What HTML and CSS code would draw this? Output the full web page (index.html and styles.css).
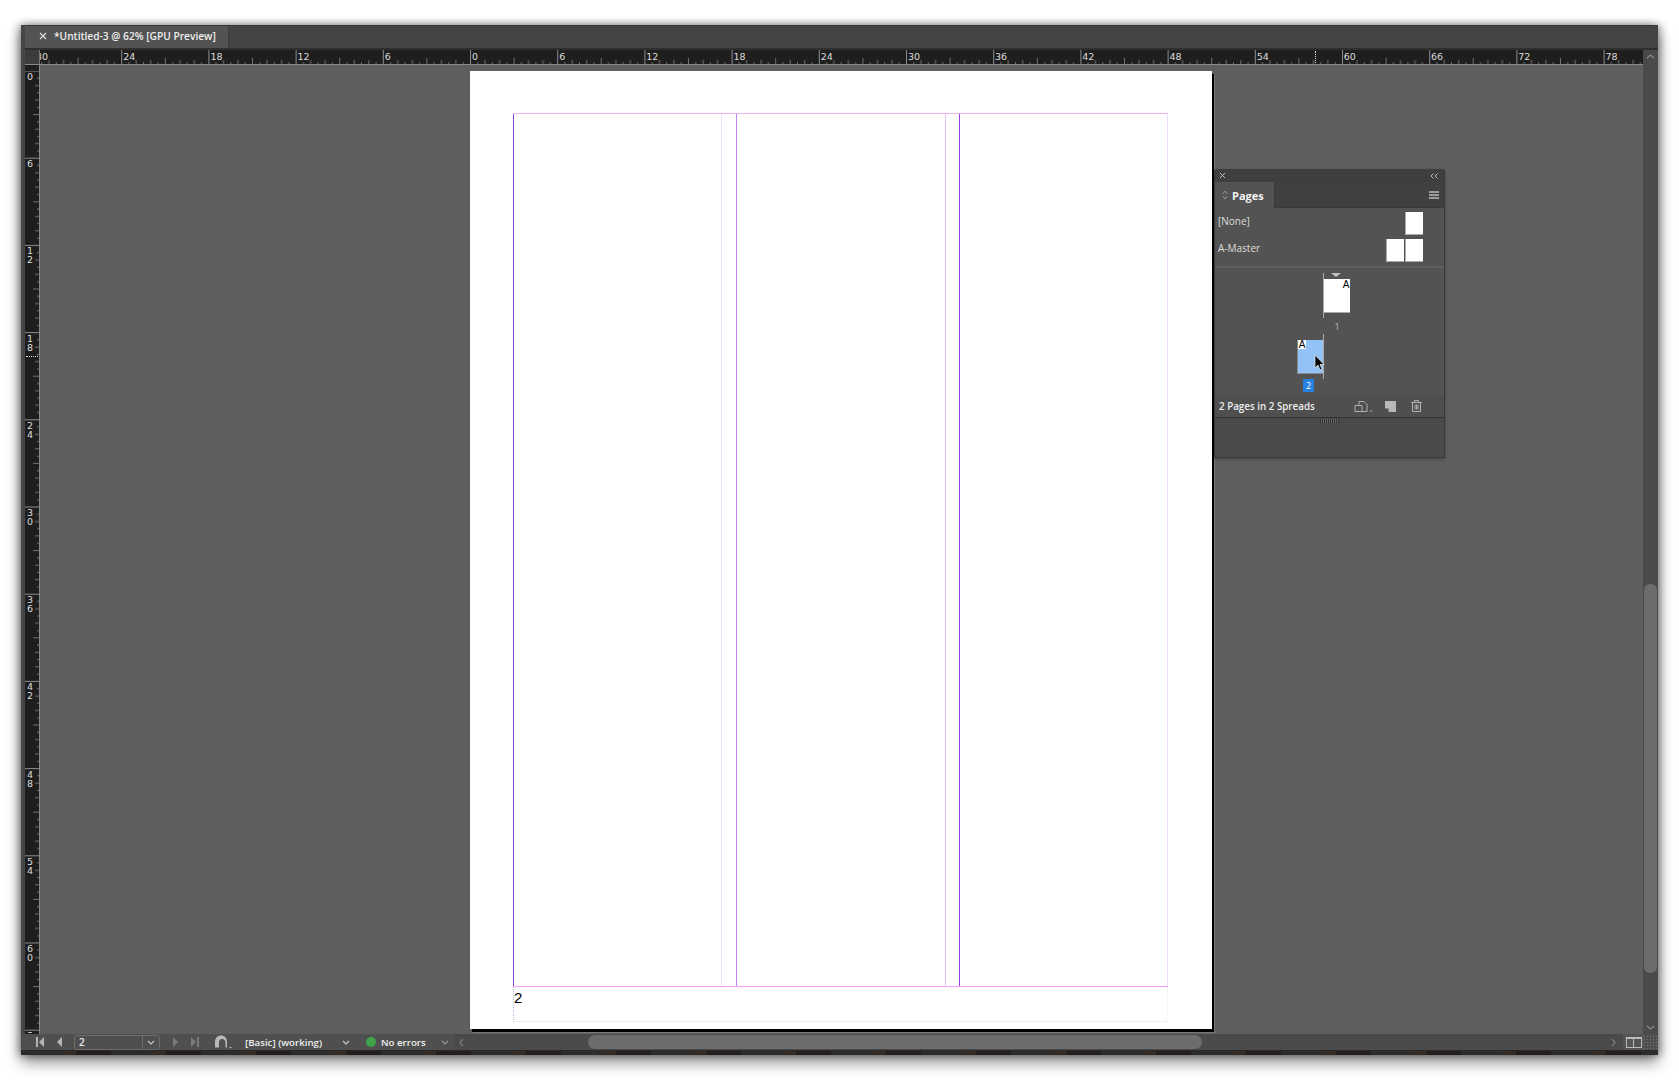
FILE: index.html
```html
<!DOCTYPE html>
<html lang="en">
<head>
    <meta charset="UTF-8">
    <title>*Untitled-3 @ 62% [GPU Preview]</title>
    <link rel="stylesheet" href="styles.css">
</head>
<body>
    <div class="window">
        <div class="tabbar">
            <div class="doc-tab">
                <svg class="tab-close" width="8" height="8" viewBox="0 0 8 8"><path d="M1 1l6 6M7 1L1 7"/></svg>
                <span class="tab-title">*Untitled-3 @ 62% [GPU Preview]</span>
            </div>
        </div>

        <div class="workspace">
            <div class="doc-area">
                <div class="ruler-row">
                    <div class="ruler-corner"></div>
                    <div class="ruler-top">
                        <svg class="ticks" width="100%" height="14">
                            <defs>
                                <pattern id="ticks-h" width="87.2" height="14" x="-6" patternUnits="userSpaceOnUse">
                                    <path class="tick-major" d="M0.5 0v14"/>
                                    <path d="M7.77 12v2M15 10v4M22.3 12v2M29.57 10v4M36.8 12v2M44.1 8v6M51.4 12v2M58.63 10v4M65.9 12v2M73.17 10v4M80.4 12v2"/>
                                </pattern>
                            </defs>
                            <rect width="100%" height="14" fill="url(#ticks-h)"/>
                        </svg>
                        <span class="rule-num">30</span><span class="rule-num">24</span><span class="rule-num">18</span><span class="rule-num">12</span><span class="rule-num">6</span><span class="rule-num">0</span><span class="rule-num">6</span><span class="rule-num">12</span><span class="rule-num">18</span><span class="rule-num">24</span><span class="rule-num">30</span><span class="rule-num">36</span><span class="rule-num">42</span><span class="rule-num">48</span><span class="rule-num">54</span><span class="rule-num">60</span><span class="rule-num">66</span><span class="rule-num">72</span><span class="rule-num">78</span>
                        <i class="mouse-x"></i>
                    </div>
                </div>

                <div class="canvas-row">
                    <div class="ruler-left">
                        <svg class="ticks" width="14" height="100%">
                            <defs>
                                <pattern id="ticks-v" width="14" height="87.2" y="-0.5" patternUnits="userSpaceOnUse">
                                    <path class="tick-major" d="M0 0.5h14"/>
                                    <path d="M12 7.77h2M10 15h4M12 22.3h2M29.57 10M10 29.57h4M12 36.8h2M8 44.1h6M12 51.4h2M10 58.63h4M12 65.9h2M10 73.17h4M12 80.4h2"/>
                                </pattern>
                            </defs>
                            <rect width="14" height="100%" fill="url(#ticks-v)"/>
                        </svg>
                        <span class="rule-num-v"><b>0</b></span>
                        <span class="rule-num-v"><b>6</b></span>
                        <span class="rule-num-v"><b>1</b><b>2</b></span>
                        <span class="rule-num-v"><b>1</b><b>8</b></span>
                        <span class="rule-num-v"><b>2</b><b>4</b></span>
                        <span class="rule-num-v"><b>3</b><b>0</b></span>
                        <span class="rule-num-v"><b>3</b><b>6</b></span>
                        <span class="rule-num-v"><b>4</b><b>2</b></span>
                        <span class="rule-num-v"><b>4</b><b>8</b></span>
                        <span class="rule-num-v"><b>5</b><b>4</b></span>
                        <span class="rule-num-v"><b>6</b><b>0</b></span>
                        <i class="num-sliver"></i>
                        <i class="mouse-y"></i>
                    </div>

                    <div class="canvas">
                        <div class="page">
                            <div class="margins">
                                <div class="col col-1"></div>
                                <div class="col col-gutter"></div>
                                <div class="col col-2"></div>
                                <div class="col col-gutter-2"></div>
                                <div class="col col-3"></div>
                            </div>
                            <div class="slug">2</div>
                        </div>

                        <div class="pages-panel">
                            <div class="panel-top">
                                <svg class="panel-x" width="7" height="7" viewBox="0 0 7 7"><path d="M1 1l5 5M6 1L1 6"/></svg>
                                <svg class="panel-collapse" width="8" height="6" viewBox="0 0 8 6"><path d="M3.500 0.500L1 3l2.500 2.500M7.500 0.500L5 3l2.500 2.500"/></svg>
                            </div>
                            <div class="panel-tabs">
                                <div class="panel-tab">
                                    <svg class="updown" width="6" height="10" viewBox="0 0 6 10"><path d="M0.800 3.800L3 1l2.200 2.800M0.800 6.200L3 9l2.200-2.800"/></svg>
                                    <span>Pages</span>
                                </div>
                                <div class="panel-menu"><i></i><i></i><i></i></div>
                            </div>

                            <div class="masters">
                                <div class="master-row">
                                    <span>[None]</span>
                                    <div class="thumbs"><i></i></div>
                                </div>
                                <div class="master-row">
                                    <span>A-Master</span>
                                    <div class="thumbs"><i></i><i></i></div>
                                </div>
                            </div>

                            <div class="spreads">
                                <div class="spread">
                                    <div class="spine"></div>
                                    <div class="thumb-page">
                                        <i class="spread-mark"></i>
                                        <span class="master-a master-a-right">A</span>
                                    </div>
                                    <div class="page-num page-num-right">1</div>
                                </div>
                                <div class="spread">
                                    <div class="thumb-page thumb-selected">
                                        <span class="master-a master-a-left">A</span>
                                    </div>
                                    <div class="spine"></div>
                                    <div class="page-num page-num-left"><span class="num-badge">2</span></div>
                                </div>
                            </div>

                            <div class="panel-footer">
                                <span class="footer-text">2 Pages in 2 Spreads</span>
                                <svg class="icon-size" width="19" height="14" viewBox="0 0 19 14"><path d="M1 6.500h7v6H1zM5 6.500V2.500h5l3 3v7H8"/><path class="solid" d="M16 11.500h2.500L17.250 13z"/></svg>
                                <svg class="icon-new" width="11" height="11" viewBox="0 0 11 11"><path class="solid" d="M0 0h11v11H3.500V7.500H0z"/></svg>
                                <svg class="icon-trash" width="11" height="12" viewBox="0 0 11 12"><path d="M0 2.500h11M3.500 2.500V0.500h4v2M1.500 2.500v9h8v-9M4 4.500v5M5.500 4.500v5M7 4.500v5"/></svg>
                            </div>
                            <div class="panel-grip"><i></i></div>
                        </div>

                        <svg class="cursor" width="11" height="17" viewBox="0 0 11 17"><path d="M1 1v13l3-3 2 5 2-1-2-4.500h4z"/></svg>
                    </div>
                </div>
            </div>

            <div class="vscroll">
                <svg class="arrow-up" width="9" height="5" viewBox="0 0 9 5"><path d="M1 4l3.500-3L8 4"/></svg>
                <div class="vscroll-track"><div class="vscroll-thumb"></div></div>
                <svg class="arrow-down" width="9" height="5" viewBox="0 0 9 5"><path d="M1 1l3.500 3L8 1"/></svg>
            </div>
        </div>

        <div class="statusbar">
            <svg class="nav nav-first" width="8" height="10" viewBox="0 0 8 10"><path d="M0 0h2v10H0zM8 0v10L3 5z"/></svg>
            <svg class="nav nav-prev" width="5" height="10" viewBox="0 0 5 10"><path d="M5 0v10L0 5z"/></svg>
            <div class="page-box">
                <span class="page-input">2</span>
                <span class="page-drop"><svg class="chev" width="8" height="5" viewBox="0 0 8 5"><path d="M1 1l3 3 3-3"/></svg></span>
            </div>
            <svg class="nav nav-next dim" width="5" height="10" viewBox="0 0 5 10"><path d="M0 0v10l5-5z"/></svg>
            <svg class="nav nav-last dim" width="8" height="10" viewBox="0 0 8 10"><path d="M0 0v10l5-5zM6 0h2v10H6z"/></svg>
            <svg class="profile" width="17" height="14" viewBox="0 0 17 14"><path class="solid" d="M0 12.500V7C0 3 2.500 0.500 6 0.500S12 3 12 7v5.500h-1.500V8C10.500 5.500 9 4 7 4S4 5.500 4 8v4.500zM14 12h3l-1.500 1.500z"/></svg>
            <span class="status-text status-profile">[Basic] (working)</span>
            <svg class="chev chev-profile" width="8" height="5" viewBox="0 0 8 5"><path d="M1 1l3 3 3-3"/></svg>
            <i class="ok-dot"></i>
            <span class="status-text status-errors">No errors</span>
            <svg class="chev chev-errors" width="8" height="5" viewBox="0 0 8 5"><path d="M1 1l3 3 3-3"/></svg>
            <div class="hscroll">
                <svg class="arrow-left" width="5" height="9" viewBox="0 0 5 9"><path d="M4 1L1 4.500 4 8"/></svg>
                <div class="hscroll-track"><div class="hscroll-thumb"></div></div>
                <svg class="arrow-right" width="5" height="9" viewBox="0 0 5 9"><path d="M1 1l3 3.500L1 8"/></svg>
            </div>
            <div class="layout-btn"><i></i><i></i></div>
            <div class="resize-grip"></div>
        </div>
        <div class="desk-edge"></div>
    </div>
</body>
</html>
```

FILE: styles.css
```css
* {
    box-sizing: border-box;
}

body {
    margin: 0;
    padding: 25px 21px 0 21px;
    height: 1080px;
    overflow: hidden;
    background-color: #fff;
    font-family: "Open Sans", sans-serif;
    color: #eee;
}

svg {
    display: block;
    flex-shrink: 0;
}

.window {
    width: 1637px;
    height: 1030px;
    display: flex;
    flex-direction: column;
    background-color: #4a4a4a;
    border-left: 4px solid #464646;
    box-shadow: 0 8px 14px rgba(0, 0, 0, 0.4), 3px 0 8px rgba(0, 0, 0, 0.3), -3px 0 8px rgba(0, 0, 0, 0.3);
}

/* tab bar */
.tabbar {
    height: 25px;
    flex-shrink: 0;
    background-color: #444;
    border-top: 1px solid #383838;
    border-bottom: 2px solid #2f2f2f;
}

.doc-tab {
    width: 204px;
    height: 22px;
    display: flex;
    align-items: center;
    padding: 0 0 2px 14px;
    background-color: #535353;
    border-right: 1px solid #3a3a3a;
}

.tab-close {
    fill: none;
    stroke: #ddd;
    stroke-width: 1.2;
}

.tab-title {
    margin-left: 7px;
    font-size: 10.2px;
    font-weight: 600;
    white-space: nowrap;
}

/* rulers */
.workspace {
    flex: 1;
    min-height: 0;
    display: flex;
}

.doc-area {
    flex: 1;
    min-width: 0;
    display: flex;
    flex-direction: column;
}

.ruler-row {
    height: 15px;
    flex-shrink: 0;
    display: flex;
    background-color: #1e1e1e;
    border-bottom: 1px solid #8a8a8a;
}

.ruler-corner {
    width: 15px;
    flex-shrink: 0;
    background-color: #3c3c3c;
    border-right: 1px solid #777;
}

.ruler-top {
    flex: 1;
    min-width: 0;
    position: relative;
    overflow: hidden;
    display: flex;
    padding-left: 2px;
    margin-left: -6px;
    clip-path: inset(0 0 0 6px);
}

.ticks {
    position: absolute;
    left: 0;
    top: 0;
    fill: none;
}

.ruler-top .ticks {
    left: 6px;
}

.ticks path {
    stroke: #6f6f6f;
    stroke-width: 1;
}

.ticks .tick-major {
    stroke: #8c8c8c;
}

.rule-num {
    width: 87.2px;
    flex-shrink: 0;
    position: relative;
    font-family: "DejaVu Sans", sans-serif;
    font-size: 9.5px;
    line-height: 14px;
    color: #ddd;
}

.mouse-x {
    position: absolute;
    left: 1281px;
    top: 1px;
    height: 12px;
    border-left: 1px dotted #ddd;
}

.canvas-row {
    flex: 1;
    min-height: 0;
    display: flex;
}

.ruler-left {
    width: 15px;
    flex-shrink: 0;
    position: relative;
    overflow: hidden;
    padding-top: 6px;
    background-color: #1e1e1e;
    border-right: 1px solid #8a8a8a;
}

.ruler-left .ticks {
    top: 6px;
}

.rule-num-v {
    display: block;
    height: 87.2px;
    position: relative;
    padding: 1px 0 0 2px;
    font-family: "DejaVu Sans", sans-serif;
    font-size: 9.5px;
    line-height: 9px;
    color: #ddd;
}

.rule-num-v b {
    display: block;
    font-weight: normal;
}

.num-sliver {
    display: block;
    width: 4px;
    height: 1px;
    margin: 2px 0 0 3px;
    background-color: #bbb;
}

.mouse-y {
    position: absolute;
    left: 1px;
    top: 291px;
    width: 12px;
    border-top: 1px dotted #ddd;
}

/* canvas + document page */
.canvas {
    flex: 1;
    min-width: 0;
    position: relative;
    padding: 6px 0 0 430px;
    background-color: #5e5e5e;
}

.page {
    width: 742px;
    height: 958px;
    padding: 42px 44px 0 43px;
    background-color: #fff;
    box-shadow: 2px 3px 0 #000, 3px 4px 0 #777;
}

.margins {
    height: 874px;
    display: grid;
    grid-template-columns: 209px 15px 209px 14px 208px;
    border-top: 1px solid #efb1f3;
    border-bottom: 1px solid #fa9dfb;
}

.col-1 {
    border-left: 1px solid #8a3fd6;
    border-right: 1px solid #ece4fb;
}

.col-gutter {
    border-right: 1px solid #c184f5;
}

.col-2 {
    border-right: 1px solid #e0c0fa;
}

.col-gutter-2 {
    border-right: 1px solid #9a40e8;
}

.col-3 {
    border-right: 1px solid #eedcf8;
}

.slug {
    height: 35px;
    padding-top: 1px;
    font-family: "Liberation Sans", sans-serif;
    font-size: 15px;
    line-height: 20px;
    color: #000;
    border-left: 1px dotted #a9bcd8;
    border-right: 1px dotted #eee;
    border-bottom: 1px dotted #ddd;
}

/* pages panel */
.pages-panel {
    position: absolute;
    left: 1174px;
    top: 104px;
    width: 231px;
    height: 289px;
    display: flex;
    flex-direction: column;
    background-color: #535353;
    border: 1px solid #383838;
    border-top: 0;
    border-radius: 3px 3px 0 0;
    box-shadow: 0 1px 3px rgba(0, 0, 0, 0.3);
}

.panel-top {
    height: 13px;
    flex-shrink: 0;
    display: flex;
    align-items: center;
    justify-content: space-between;
    padding: 0 6px 0 4px;
    background-color: #3e3e3e;
    border-radius: 3px 3px 0 0;
}

.panel-x,
.panel-collapse {
    fill: none;
    stroke: #bbb;
    stroke-width: 1;
}

.panel-tabs {
    height: 26px;
    flex-shrink: 0;
    display: flex;
    justify-content: space-between;
    background-color: #404040;
    border-bottom: 1px solid #383838;
}

.panel-tab {
    width: 60px;
    display: flex;
    align-items: center;
    gap: 4px;
    padding-left: 7px;
    background-color: #535353;
    border-right: 1px solid #383838;
    margin-bottom: -1px;
    font-size: 11px;
    font-weight: 700;
    color: #f2f2f2;
}

.updown {
    fill: none;
    stroke: #aaa;
    stroke-width: 0.8;
}

.panel-menu {
    display: flex;
    flex-direction: column;
    justify-content: center;
    gap: 1px;
    padding-right: 5px;
}

.panel-menu i {
    width: 10px;
    height: 2px;
    background-color: #9a9a9a;
}

.masters {
    height: 60px;
    flex-shrink: 0;
    padding-top: 2px;
    border-bottom: 2px solid #5e5e5e;
}

.master-row {
    height: 27px;
    display: flex;
    align-items: center;
    justify-content: space-between;
    padding: 0 21px 0 3px;
    font-size: 10px;
    color: #ddd;
}

.master-row span {
    margin-bottom: 5px;
}

.thumbs {
    display: flex;
    gap: 1px;
}

.thumbs i {
    width: 18px;
    height: 23px;
    background-color: #fff;
    border-left: 1px solid #aaa;
    border-bottom: 1px solid #aaa;
}

.spreads {
    flex: 1;
    padding-top: 5px;
}

.spread {
    width: 53px;
    margin: 0 0 3px 82px;
    display: grid;
    grid-template-columns: 26px 1px 26px;
    grid-template-rows: 45px auto;
}

.spine {
    grid-row: 1;
    grid-column: 2;
    background-color: #aaa;
}

.thumb-page {
    position: relative;
    grid-row: 1;
    grid-column: 3;
    height: 34px;
    margin-top: 6px;
    background-color: #fff;
    border-bottom: 1px solid #aaa;
}

.thumb-selected {
    grid-column: 1;
    background-color: #93c2f7;
    border-left: 1px solid #888;
    border-bottom: 1px solid #888;
}

.spread-mark {
    position: absolute;
    left: 7px;
    top: -6px;
    border-left: 5px solid transparent;
    border-right: 5px solid transparent;
    border-top: 4px solid #c4c4c4;
}

.master-a {
    position: absolute;
    top: 0;
    width: 8px;
    height: 9px;
    font-family: "Liberation Sans", sans-serif;
    font-size: 10px;
    line-height: 9px;
    text-align: center;
    color: #000;
    background-color: #fff;
}

.master-a-right {
    right: 0;
    top: 1px;
}

.master-a-left {
    left: 0;
}

.page-num {
    grid-row: 2;
    height: 13px;
    font-size: 9px;
    line-height: 12px;
    text-align: center;
    color: #bbb;
}

.page-num-right {
    grid-column: 3;
    line-height: 17px;
}

.page-num-left {
    grid-column: 1 / span 2;
    display: flex;
}

.num-badge {
    width: 11px;
    height: 13px;
    margin-left: 6px;
    line-height: 13px;
    color: #fff;
    background-color: #2680e0;
}

.panel-footer {
    height: 23px;
    flex-shrink: 0;
    display: flex;
    align-items: center;
    padding-left: 4px;
    background-color: #4f4f4f;
    border-bottom: 1px solid #333;
}

.footer-text {
    width: 135px;
    font-size: 9.8px;
    font-weight: 600;
    white-space: nowrap;
}

.panel-footer svg {
    fill: none;
    stroke: #b0b0b0;
}

.panel-footer .solid,
.profile .solid {
    fill: #b8b8b8;
    stroke: none;
}

.icon-new {
    margin-left: 12px;
}

.icon-trash {
    margin-left: 15px;
}

.panel-grip {
    flex: 1;
    display: flex;
    justify-content: center;
    padding-top: 1px;
    background-color: #4a4a4a;
}

.panel-grip i {
    width: 19px;
    height: 4px;
    background: repeating-linear-gradient(90deg, #333 0 1px, #666 1px 2px);
}

.cursor {
    position: absolute;
    left: 1274px;
    top: 289px;
    fill: #000;
    stroke: #ddd;
    stroke-width: 0.8;
}

/* vertical scrollbar */
.vscroll {
    width: 15px;
    flex-shrink: 0;
    display: flex;
    flex-direction: column;
    align-items: center;
    background-color: #4a4a4a;
}

.vscroll svg {
    fill: none;
    stroke: #8a8a8a;
    stroke-width: 1.2;
}

.arrow-up {
    margin-top: 4px;
}

.arrow-down {
    margin-bottom: 4px;
}

.vscroll-track {
    flex: 1;
    width: 100%;
    padding-top: 525px;
}

.vscroll-thumb {
    width: 13px;
    height: 389px;
    margin-left: 1px;
    background-color: #6c6c6c;
    border-radius: 6px;
}

/* status bar */
.statusbar {
    height: 16px;
    flex-shrink: 0;
    display: flex;
    align-items: center;
    padding-left: 14px;
    background-color: #4f4f4f;
    margin-left: -3px;
}

.nav {
    fill: #b5b5b5;
}

.nav.dim {
    fill: #7a7a7a;
}

.nav-prev {
    margin-left: 13px;
}

.page-box {
    width: 86px;
    height: 15px;
    margin-left: 12px;
    display: flex;
    border: 1px solid #6c6c6c;
    border-radius: 3px;
}

.page-input {
    width: 68px;
    padding-left: 4px;
    font-size: 10px;
    line-height: 13px;
    font-weight: 600;
    border-right: 1px solid #6c6c6c;
}

.page-drop {
    flex: 1;
    display: flex;
    align-items: center;
    justify-content: center;
}

.chev {
    fill: none;
    stroke: #ccc;
    stroke-width: 1.1;
}

.nav-next {
    margin-left: 13px;
}

.nav-last {
    margin-left: 13px;
}

.profile {
    margin-left: 16px;
}

.status-text {
    font-size: 9.7px;
    font-weight: 600;
    white-space: nowrap;
}

.status-profile {
    margin-left: 13px;
    width: 97px;
}

.ok-dot {
    width: 10px;
    height: 10px;
    margin-left: 16px;
    border-radius: 50%;
    background-color: #3fa548;
}

.status-errors {
    margin-left: 5px;
    width: 60px;
}

.chev-errors {
    stroke: #999;
}

.hscroll {
    flex: 1;
    min-width: 0;
    height: 100%;
    display: flex;
    align-items: center;
    margin-left: 5px;
    padding: 0 7px 0 5px;
    background-color: #4a4a4a;
}

.hscroll svg {
    fill: none;
    stroke: #8a8a8a;
    stroke-width: 1.1;
}

.hscroll-track {
    flex: 1;
    height: 100%;
    padding-left: 124px;
}

.hscroll-thumb {
    width: 614px;
    height: 14px;
    margin-top: 1px;
    background-color: #6c6c6c;
    border-radius: 7px;
}

.layout-btn {
    width: 21px;
    height: 100%;
    display: flex;
    justify-content: center;
    align-items: center;
    background-color: #555;
}

.layout-btn i {
    width: 8px;
    height: 11px;
    border: 1px solid #bbb;
    border-top-width: 2px;
}

.layout-btn i + i {
    border-left: 0;
}

.resize-grip {
    width: 14px;
    height: 100%;
    background-image: radial-gradient(#777 0.6px, transparent 0.8px);
    background-size: 3px 3px;
    background-position: 2px 1px;
}

.desk-edge {
    height: 5px;
    flex-shrink: 0;
    margin-left: -4px;
    background: repeating-linear-gradient(90deg, #2c2c2c 0 40px, #352c26 40px 55px, #241f1c 55px 90px);
    border-top: 1px solid #2a2a2a;
}
```
